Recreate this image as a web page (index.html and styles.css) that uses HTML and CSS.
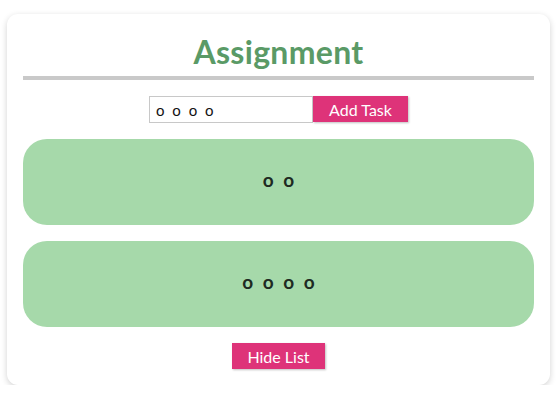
FILE: index.html
```html
<!DOCTYPE html>
<html>
<head>
<meta charset="utf-8">
<link rel="stylesheet" href="styles.css">
</head>
<body>
<div class="card">
  <h1 class="title">Assignment</h1>
  <div class="rule"></div>
  <div class="add-row">
    <input class="task-input" type="text" value="o o o o">
    <button class="btn add-btn">Add Task</button>
  </div>
  <div class="list">
    <div class="task">o o</div>
    <div class="task">o o o o</div>
  </div>
  <div class="footer">
    <button class="btn hide-btn">Hide List</button>
  </div>
</div>
</body>
</html>
```

FILE: styles.css
```css
html, body {
  margin: 0;
  padding: 0;
  background: #ffffff;
}
body {
  padding: 14px 6px 0 7px;
  font-family: "Lato", "Noto Sans", sans-serif;
}
.card {
  box-sizing: border-box;
  width: 543px;
  height: 371px;
  background: #fff;
  border-radius: 11px;
  box-shadow: 0 2px 6px rgba(0,0,0,0.18);
  padding: 0 16px;
  display: flex;
  flex-direction: column;
}
.title {
  margin: 0;
  padding-top: 20px;
  height: 42px;
  line-height: 36px;
  text-align: center;
  font-size: 32px;
  font-weight: 700;
  letter-spacing: 0.3px;
  color: #5a9a66;
}
.rule {
  height: 4px;
  background: #c9c9c9;
}
.add-row {
  display: flex;
  justify-content: center;
  margin-top: 16px;
  height: 27px;
}
.task-input {
  box-sizing: border-box;
  width: 164px;
  height: 27px;
  border: 1px solid #c8c8c8;
  padding: 0 6px;
  font-family: "Lato", sans-serif;
  font-size: 15px;
  word-spacing: 4px;
  color: #111;
  outline: none;
}
.btn {
  border: none;
  background: #de3379;
  color: #fff;
  font-family: "Lato", sans-serif;
  font-size: 16px;
  padding: 0;
  box-shadow: 1px 1px 2px rgba(0,0,0,0.25);
}
.add-btn {
  width: 95px;
  height: 26px;
}
.list {
  margin-top: 16px;
  display: flex;
  flex-direction: column;
  gap: 16px;
}
.task {
  box-sizing: border-box;
  height: 86px;
  padding-bottom: 5px;
  border-radius: 24px;
  background: #a6d9aa;
  display: flex;
  align-items: center;
  justify-content: center;
  font-size: 19px;
  font-weight: 700;
  color: #1e2a22;
  word-spacing: 5px;
}
.footer {
  display: flex;
  justify-content: center;
  margin-top: 16px;
}
.hide-btn {
  width: 93px;
  height: 26px;
}
```
